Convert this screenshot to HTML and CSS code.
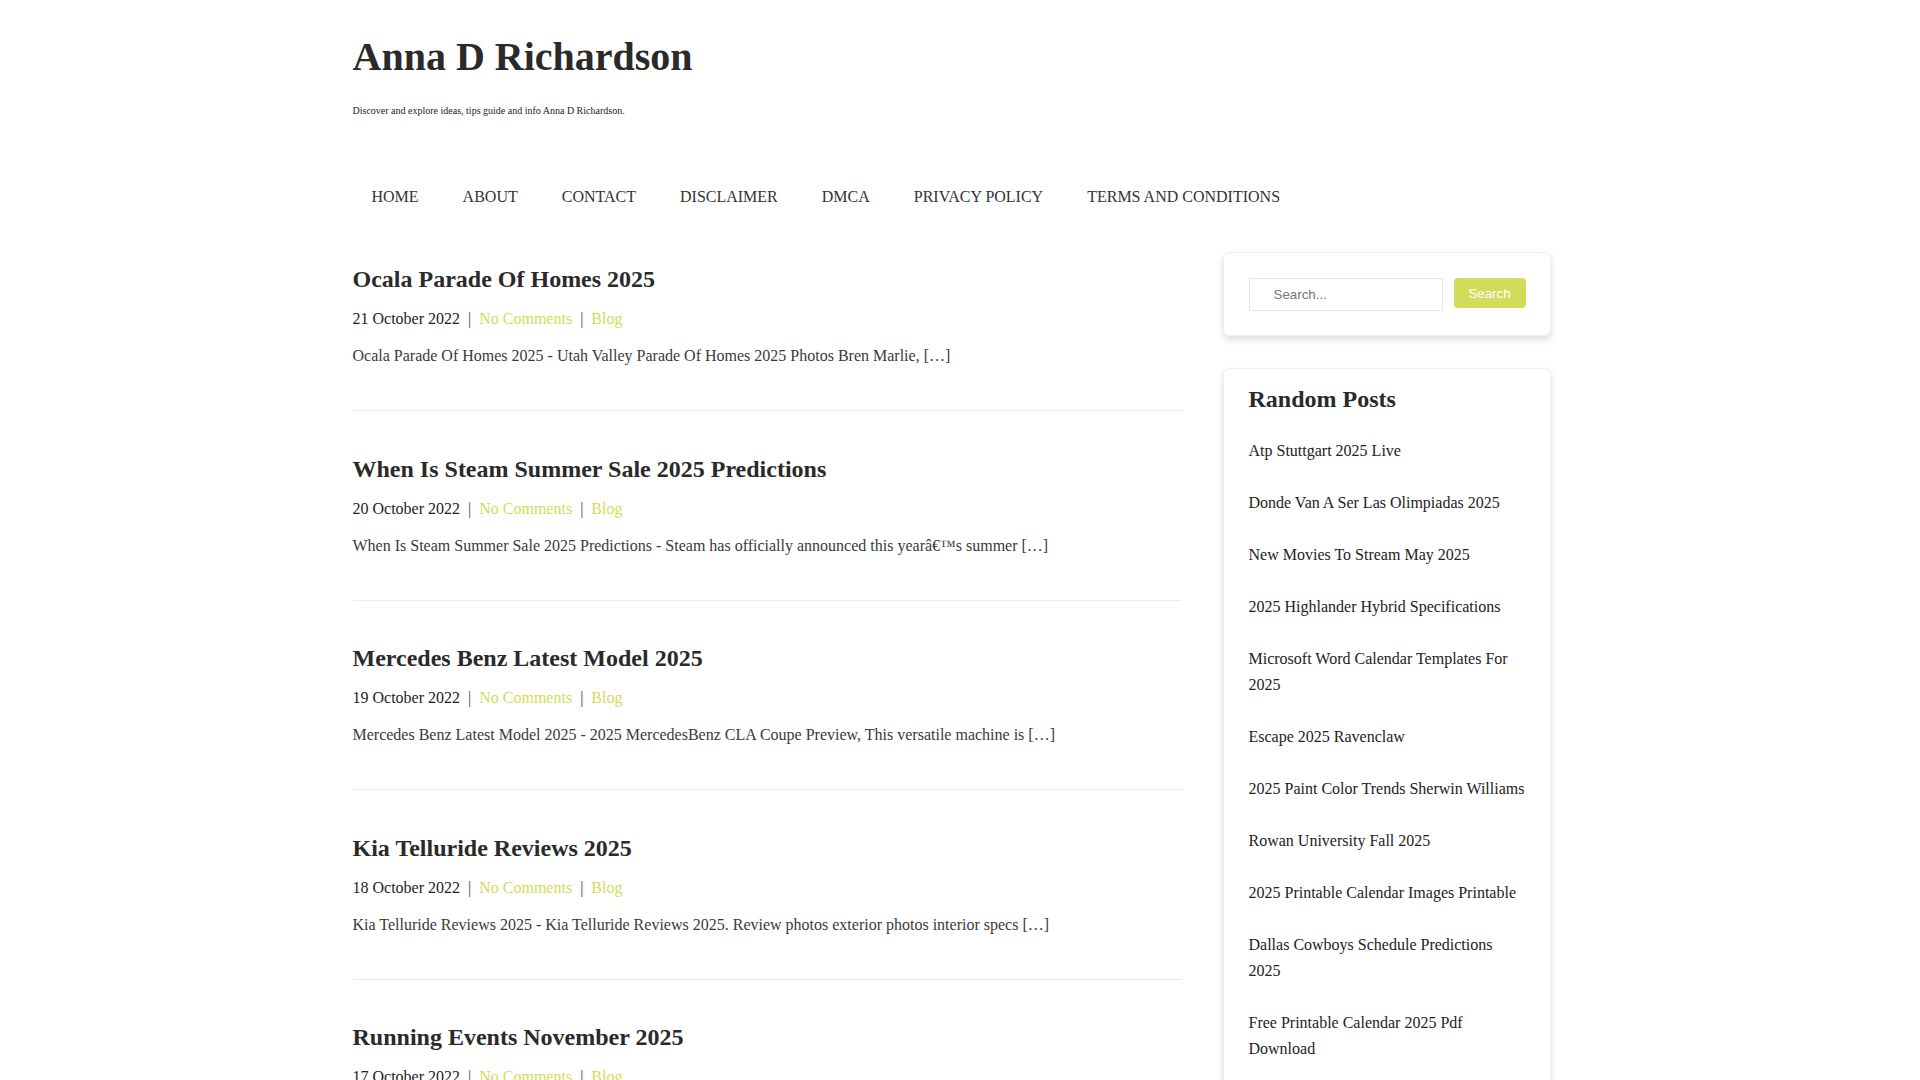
FILE: index.html
```html
<!DOCTYPE html>
<html lang="en">
<head>
<meta charset="utf-8">
<title>Anna D Richardson</title>
<link rel="stylesheet" href="styles.css">
</head>
<body>
<div class="container">
  <header class="site-header">
    <h1 class="site-title">Anna D Richardson</h1>
    <p class="site-tagline">Discover and explore ideas, tips guide and info Anna D Richardson.</p>
  </header>
  <nav class="main-nav">
    <a href="#">HOME</a>
    <a href="#">ABOUT</a>
    <a href="#">CONTACT</a>
    <a href="#">DISCLAIMER</a>
    <a href="#">DMCA</a>
    <a href="#">PRIVACY POLICY</a>
    <a href="#">TERMS AND CONDITIONS</a>
  </nav>
  <div class="layout">
    <main class="posts">
      <article class="post">
        <h2 class="post-title">Ocala Parade Of Homes 2025</h2>
        <div class="post-meta"><span>21 October 2022</span><span class="sep">|</span><a href="#">No Comments</a><span class="sep">|</span><a href="#">Blog</a></div>
        <p class="post-excerpt">Ocala Parade Of Homes 2025 - Utah Valley Parade Of Homes 2025 Photos Bren Marlie, […]</p>
      </article>
      <article class="post">
        <h2 class="post-title">When Is Steam Summer Sale 2025 Predictions</h2>
        <div class="post-meta"><span>20 October 2022</span><span class="sep">|</span><a href="#">No Comments</a><span class="sep">|</span><a href="#">Blog</a></div>
        <p class="post-excerpt">When Is Steam Summer Sale 2025 Predictions - Steam has officially announced this yearâ€™s summer […]</p>
      </article>
      <article class="post">
        <h2 class="post-title">Mercedes Benz Latest Model 2025</h2>
        <div class="post-meta"><span>19 October 2022</span><span class="sep">|</span><a href="#">No Comments</a><span class="sep">|</span><a href="#">Blog</a></div>
        <p class="post-excerpt">Mercedes Benz Latest Model 2025 - 2025 MercedesBenz CLA Coupe Preview, This versatile machine is […]</p>
      </article>
      <article class="post">
        <h2 class="post-title">Kia Telluride Reviews 2025</h2>
        <div class="post-meta"><span>18 October 2022</span><span class="sep">|</span><a href="#">No Comments</a><span class="sep">|</span><a href="#">Blog</a></div>
        <p class="post-excerpt">Kia Telluride Reviews 2025 - Kia Telluride Reviews 2025. Review photos exterior photos interior specs […]</p>
      </article>
      <article class="post">
        <h2 class="post-title">Running Events November 2025</h2>
        <div class="post-meta"><span>17 October 2022</span><span class="sep">|</span><a href="#">No Comments</a><span class="sep">|</span><a href="#">Blog</a></div>
        <p class="post-excerpt">Running Events November 2025 - Find the best running events, races and marathons near you in November […]</p>
      </article>
      <article class="post">
        <h2 class="post-title">Atp Stuttgart 2025 Live</h2>
        <div class="post-meta"><span>16 October 2022</span><span class="sep">|</span><a href="#">No Comments</a><span class="sep">|</span><a href="#">Blog</a></div>
        <p class="post-excerpt">Atp Stuttgart 2025 Live - Follow the live scores, results and draws of the tournament […]</p>
      </article>
    </main>
    <aside class="sidebar">
      <section class="widget widget-search">
        <form class="search-form">
          <input class="search-input" type="text" placeholder="Search...">
          <button class="search-button" type="button">Search</button>
        </form>
      </section>
      <section class="widget widget-posts">
        <h3 class="widget-title">Random Posts</h3>
        <ul class="widget-list">
          <li><a href="#">Atp Stuttgart 2025 Live</a></li>
          <li><a href="#">Donde Van A Ser Las Olimpiadas 2025</a></li>
          <li><a href="#">New Movies To Stream May 2025</a></li>
          <li><a href="#">2025 Highlander Hybrid Specifications</a></li>
          <li><a href="#">Microsoft Word Calendar Templates For 2025</a></li>
          <li><a href="#">Escape 2025 Ravenclaw</a></li>
          <li><a href="#">2025 Paint Color Trends Sherwin Williams</a></li>
          <li><a href="#">Rowan University Fall 2025</a></li>
          <li><a href="#">2025 Printable Calendar Images Printable</a></li>
          <li><a href="#">Dallas Cowboys Schedule Predictions 2025</a></li>
          <li><a href="#">Free Printable Calendar 2025 Pdf Download</a></li>
          <li><a href="#">Kia Telluride Reviews 2025</a></li>
        </ul>
      </section>
    </aside>
  </div>
</div>
</body>
</html>
```

FILE: styles.css
```css
* {
  box-sizing: border-box;
}

html, body {
  margin: 0;
  padding: 0;
  background: #ffffff;
}

body {
  padding-right: 15px;
  font-family: "Liberation Serif", "Times New Roman", serif;
  color: #222222;
  font-size: 16px;
}

a {
  text-decoration: none;
}

.container {
  width: 1200px;
  margin: 0 auto;
}

.site-header {
  padding-top: 33px;
}

.site-title {
  margin: 0;
  font-size: 40px;
  line-height: 48px;
  font-weight: bold;
  color: #2a2a2a;
}

.site-tagline {
  margin: 22px 0 0;
  font-size: 10px;
  line-height: 15px;
  color: #222222;
}

.main-nav {
  display: flex;
  margin-top: 67px;
}

.main-nav a {
  display: block;
  padding: 0 22px;
  font-size: 16px;
  line-height: 24px;
  color: #333333;
}

.main-nav a:first-child {
  padding-left: 19px;
}

.layout {
  display: grid;
  grid-template-columns: 829px 328px;
  column-gap: 41px;
  margin-top: 43px;
  align-items: start;
}

.post {
  padding: 42.5px 0 42px;
  border-bottom: 1px solid #ececf0;
}

.post:first-child {
  padding-top: 12px;
}

.post-title {
  margin: 0;
  font-size: 24px;
  line-height: 30px;
  font-weight: bold;
  color: #2a2a2a;
}

.post-meta {
  margin-top: 13px;
  font-size: 16px;
  line-height: 24px;
  color: #222222;
}

.post-meta a {
  color: #d2dc58;
}

.post-meta .sep {
  margin: 0 8px;
  color: #444444;
}

.post-excerpt {
  margin: 13px 0 0;
  font-size: 16px;
  line-height: 24px;
  color: #3a3a3a;
}

.sidebar {
  display: flex;
  flex-direction: column;
  gap: 32px;
}

.widget {
  border: 1px solid #eeeeee;
  border-radius: 6px;
  background: #ffffff;
  box-shadow: 0 4px 7px rgba(0, 0, 0, 0.13);
}

.widget-search {
  padding: 25px 24px 24px 25px;
}

.search-form {
  display: flex;
  align-items: flex-start;
  gap: 11px;
  margin: 0;
}

.search-input {
  width: 194px;
  height: 33px;
  padding: 0 0 0 24px;
  border: 1px solid #e6e6e6;
  font-family: "Liberation Sans", Arial, sans-serif;
  font-size: 13.33px;
  color: #333333;
  outline: none;
}

.search-input::placeholder {
  color: #757575;
}

.search-button {
  width: 73px;
  height: 30px;
  padding: 0;
  border: none;
  border-radius: 4px;
  background: #d3dc5a;
  color: #ffffff;
  font-family: "Liberation Sans", Arial, sans-serif;
  font-size: 13.33px;
}

.widget-posts {
  padding: 16px 22px 16px 25px;
}

.widget-title {
  margin: 0;
  font-size: 24px;
  line-height: 28px;
  font-weight: bold;
  color: #2a2a2a;
}

.widget-list {
  list-style: none;
  margin: 12px 0 0;
  padding: 0;
}

.widget-list li {
  padding: 13px 0;
  font-size: 16px;
  line-height: 26px;
}

.widget-list a {
  color: #222222;
}
```
